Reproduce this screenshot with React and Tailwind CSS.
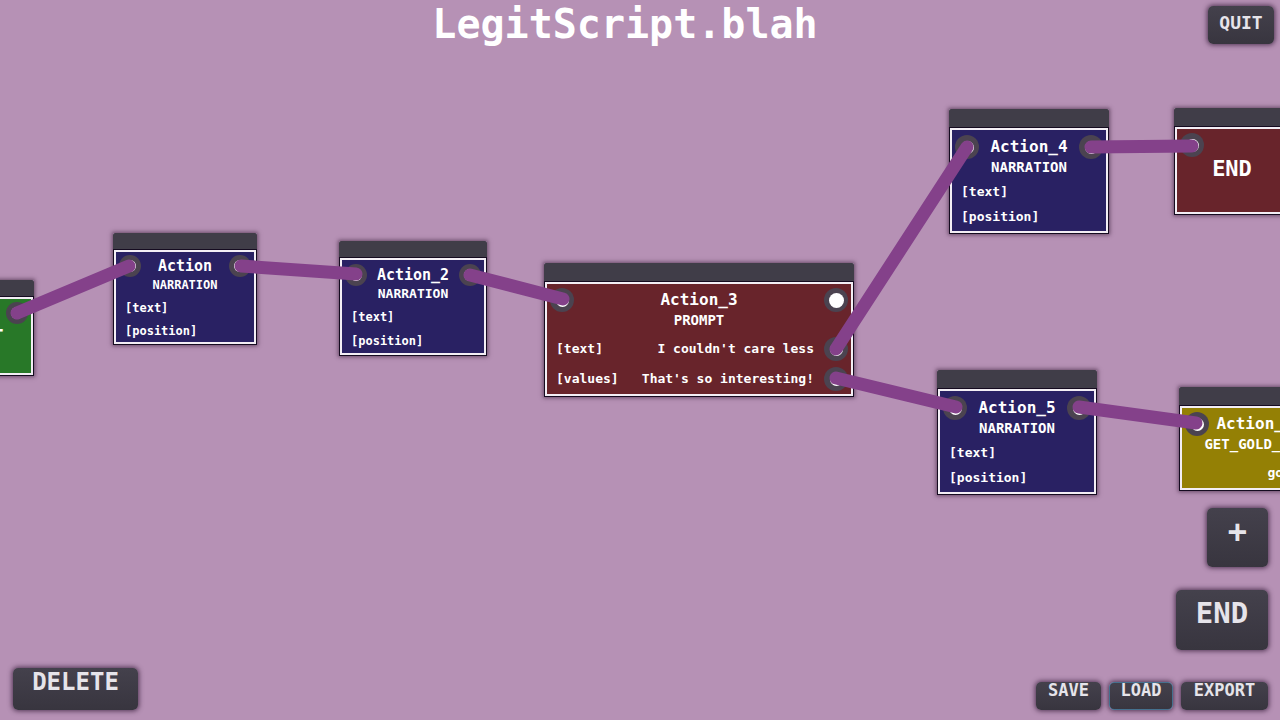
import React from "react";

const scales = {
  sm: {
    bar: "h-4",
    body: "pt-0.5",
    title: "h-6 text-[15px]",
    kind: "h-[14px] text-[12px]",
    rows: "mt-1",
    row: "h-[23px] text-[12px]",
    port: "size-[22px]",
    pin: "size-3",
  },
  base: {
    bar: "h-4",
    body: "pt-[3px]",
    title: "h-6 text-[15px]",
    kind: "h-[14px] text-[13px]",
    rows: "mt-1",
    row: "h-6 text-[12px]",
    port: "size-[22px]",
    pin: "size-3",
  },
  md: {
    bar: "h-[18px]",
    body: "pt-[5px] pb-0.5",
    title: "h-6 text-[16px]",
    kind: "h-4 text-[14px]",
    rows: "mt-1",
    row: "h-[25px] text-[13px]",
    port: "size-6",
    pin: "size-[13px]",
  },
  lg: {
    bar: "h-[18px]",
    body: "pt-1",
    title: "h-6 text-[16px]",
    kind: "h-4 text-[14px]",
    rows: "mt-1.5",
    row: "h-[30px] text-[13px]",
    port: "size-6",
    pin: "size-[13px]",
  },
};

const narration = [{ field: "[text]" }, { field: "[position]" }];

const nodes = [
  { id: "Action", kind: "NARRATION", scale: "sm", place: "left-[113px] top-[233px] w-[144px]", fill: "bg-[#292163]", rows: narration },
  { id: "Action_2", kind: "NARRATION", scale: "base", place: "left-[339px] top-[241px] w-[148px]", fill: "bg-[#292163]", rows: narration },
  {
    id: "Action_3", kind: "PROMPT", scale: "lg", place: "left-[544px] top-[263px] w-[310px]", fill: "bg-[#68242b]", open: true,
    rows: [
      { field: "[text]", value: "I couldn't care less", output: true },
      { field: "[values]", value: "That's so interesting!", output: true },
    ],
  },
  { id: "Action_4", kind: "NARRATION", scale: "md", place: "left-[949px] top-[109px] w-[160px]", fill: "bg-[#292163]", rows: narration },
  { id: "Action_5", kind: "NARRATION", scale: "md", place: "left-[937px] top-[370px] w-[160px]", fill: "bg-[#292163]", rows: narration },
  { id: "Action_6", kind: "GET_GOLD_TOT", scale: "lg", place: "left-[1179px] top-[387px] w-[152px]", fill: "bg-[#948005]", rows: [{ value: "got", output: true }] },
];

const wires = [
  [17, 313, 129, 266],
  [241, 266, 356, 274],
  [470, 275, 563, 299],
  [836, 349, 967, 147],
  [836, 378, 956, 407],
  [1091, 147, 1192, 146],
  [1079, 407, 1196, 423],
];

function Port({ label, scale, open }) {
  return (
    <button type="button" aria-label={label} className={`flex shrink-0 items-center justify-center rounded-full bg-[#4b4350] ${scale.port}`}>
      <span className={`rounded-full bg-white ${open ? "size-[15px]" : scale.pin}`} />
    </button>
  );
}

function Frame({ place, bar, fill, children }) {
  return (
    <article className={`absolute shadow-[0_0_4px_1px_rgba(50,25,50,0.6)] ${place}`}>
      <div className={`rounded-t-xs bg-[#403d48] ${bar}`} />
      <div className="border border-[#150b20]">
        <div className={`border-2 border-[#f3eef5] ${fill}`}>{children}</div>
      </div>
    </article>
  );
}

function Node({ node }) {
  const s = scales[node.scale];
  return (
    <Frame place={node.place} bar={s.bar} fill={node.fill}>
      <div className={`px-[3px] ${s.body}`}>
        <div className={`flex items-center justify-between ${s.title}`}>
          <Port label={`${node.id} input`} scale={s} />
          <h2>{node.id}</h2>
          <Port label={`${node.id} output`} scale={s} open={node.open} />
        </div>
        <p className={`flex items-center justify-center ${s.kind}`}>{node.kind}</p>
        <div className={s.rows}>
          {node.rows.map((row, i) => (
            <div key={i} className={`flex items-center px-1.5 ${s.row}`}>
              <span>{row.field}</span>
              <span className="ml-auto">{row.value}</span>
              {row.output && (
                <span className="-mr-1.5 ml-2.5 flex">
                  <Port label={`${row.value} output`} scale={s} />
                </span>
              )}
            </div>
          ))}
        </div>
      </div>
    </Frame>
  );
}

function PanelButton({ className, children }) {
  return (
    <button
      type="button"
      className={`flex justify-center rounded-[5px] border bg-linear-to-b from-[#44414c] to-[#38353f] bg-origin-border text-[#e6e4ea] shadow-[0_0_5px_1px_rgba(45,20,50,0.75)] ${className}`}
    >
      {children}
    </button>
  );
}

export default function App() {
  return (
    <div className="relative flex h-screen w-full flex-col justify-between overflow-hidden bg-[#b691b5] font-['DejaVu_Sans_Mono',monospace] font-bold text-white">
      <main className="absolute inset-0 overflow-hidden">
        <Frame place="left-[-87px] top-[280px] w-[121px]" bar="h-4" fill="bg-[#287828]">
          <div className="flex h-[74px] flex-col items-end px-[3px] pt-[3px]">
            <Port label="Start output" scale={scales.sm} />
            <h2 className="self-center text-[20px] leading-6">START</h2>
          </div>
        </Frame>
        {nodes.map((node) => (
          <Node key={node.id} node={node} />
        ))}
        <Frame place="left-[1174px] top-[108px] w-[116px]" bar="h-[18px]" fill="bg-[#68242b]">
          <div className="flex h-[83px] flex-col px-[3px] pt-1">
            <Port label="End input" scale={scales.md} />
            <h2 className="self-center text-[22px] leading-6">END</h2>
          </div>
        </Frame>
        <svg className="pointer-events-none absolute inset-0 size-full" stroke="#84418a" strokeWidth="13" strokeLinecap="round" aria-hidden="true">
          {wires.map(([x1, y1, x2, y2]) => (
            <line key={`${x1}-${y1}`} x1={x1} y1={y1} x2={x2} y2={y2} />
          ))}
        </svg>
      </main>

      <header className="relative grid grid-cols-[1fr_auto_1fr] items-start pt-1.5 pr-1.5">
        <h1 className="col-start-2 pr-6 text-[40px] leading-9">LegitScript.blah</h1>
        <PanelButton className="h-[38px] w-[66px] justify-self-end border-transparent pt-1.5 text-[18px] leading-5">QUIT</PanelButton>
      </header>

      <footer className="relative flex items-end justify-between pr-3 pb-2.5 pl-[13px]">
        <PanelButton className="h-[42px] w-[125px] border-transparent pt-px text-[24px] leading-6">DELETE</PanelButton>
        <div className="flex flex-col items-end">
          <PanelButton className="mb-[23px] h-[59px] w-[61px] border-transparent pt-1.5 text-[32px] leading-8">+</PanelButton>
          <PanelButton className="mb-8 h-[60px] w-[92px] border-transparent pt-1.5 text-[29px] leading-8">END</PanelButton>
          <div className="flex gap-2 text-[17px] leading-[14px]">
            <PanelButton className="h-7 w-[65px] border-transparent">SAVE</PanelButton>
            <PanelButton className="h-7 w-16 border-[#45718f]">LOAD</PanelButton>
            <PanelButton className="h-7 w-[87px] border-transparent">EXPORT</PanelButton>
          </div>
        </div>
      </footer>
    </div>
  );
}
